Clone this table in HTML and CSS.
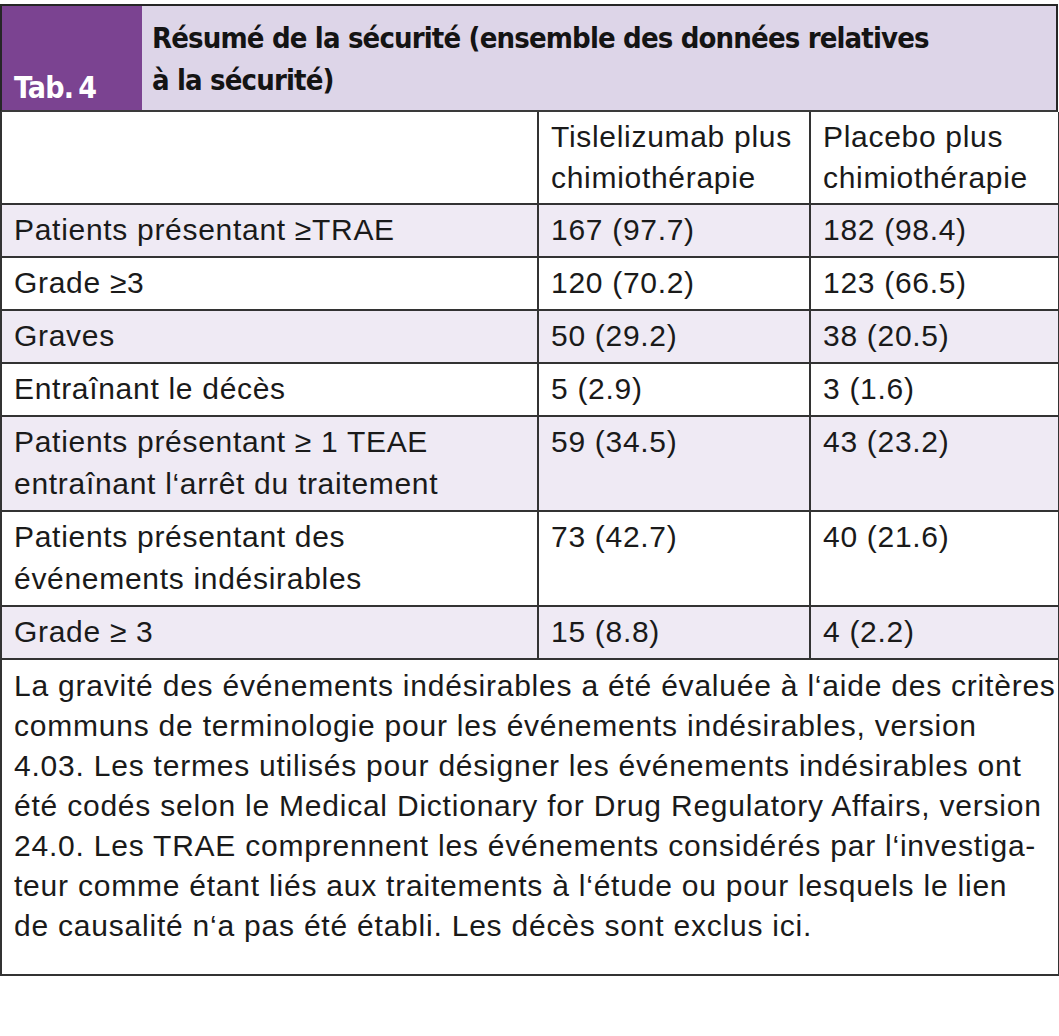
FILE: index.html
```html
<!DOCTYPE html>
<html lang="fr">
<head>
<meta charset="utf-8">
<title>Tab. 4</title>
<link rel="stylesheet" href="styles.css">
</head>
<body>
<div class="wrap">
  <div class="head">
    <div class="tab-label">Tab.<span class="tab-num">4</span></div>
    <div class="tab-title">Résumé de la sécurité (ensemble des données relatives<br>à la sécurité)</div>
  </div>
  <table class="data">
    <colgroup>
      <col class="c1"><col class="c2"><col class="c3">
    </colgroup>
    <tr class="plain colhead">
      <td></td>
      <td>Tislelizumab plus<br>chimiothérapie</td>
      <td>Placebo plus<br>chimiothérapie</td>
    </tr>
    <tr class="tint"><td>Patients présentant ≥TRAE</td><td>167 (97.7)</td><td>182 (98.4)</td></tr>
    <tr class="plain"><td>Grade ≥3</td><td>120 (70.2)</td><td>123 (66.5)</td></tr>
    <tr class="tint"><td>Graves</td><td>50 (29.2)</td><td>38 (20.5)</td></tr>
    <tr class="plain"><td>Entraînant le décès</td><td>5 (2.9)</td><td>3 (1.6)</td></tr>
    <tr class="tint"><td>Patients présentant ≥ 1 TEAE<br>entraînant l‘arrêt du traitement</td><td>59 (34.5)</td><td>43 (23.2)</td></tr>
    <tr class="plain"><td>Patients présentant des<br>événements indésirables</td><td>73 (42.7)</td><td>40 (21.6)</td></tr>
    <tr class="tint"><td>Grade ≥ 3</td><td>15 (8.8)</td><td>4 (2.2)</td></tr>
    <tr class="plain"><td colspan="3" class="note">La gravité des événements indésirables a été évaluée à l‘aide des critères<br>communs de terminologie pour les événements indésirables, version<br>4.03. Les termes utilisés pour désigner les événements indésirables ont<br>été codés selon le Medical Dictionary for Drug Regulatory Affairs, version<br>24.0. Les TRAE comprennent les événements considérés par l‘investiga-<br>teur comme étant liés aux traitements à l‘étude ou pour lesquels le lien<br>de causalité n‘a pas été établi. Les décès sont exclus ici.</td></tr>
  </table>
</div>
</body>
</html>
```

FILE: styles.css
```css
html, body {
  margin: 0;
  padding: 0;
  background: #ffffff;
}

body {
  padding-top: 4px;
  font-family: "Liberation Sans", Arial, sans-serif;
  color: #1a1a1a;
}

.wrap {
  width: 1058px;
}

.head {
  display: flex;
  border: 2px solid #262626;
  border-bottom: 2px solid #3a3a3a;
  height: 108px;
  box-sizing: border-box;
}

.tab-label {
  width: 140px;
  background: #7b4391;
  color: #ffffff;
  font-family: "Liberation Sans Narrow", "DejaVu Sans Condensed", sans-serif;
  font-weight: bold;
  font-size: 30px;
  display: flex;
  align-items: flex-end;
  padding: 0 0 5px 12px;
  box-sizing: border-box;
  letter-spacing: -0.8px;
}

.tab-num {
  margin-left: 5px;
}

.tab-title {
  flex: 1;
  background: #ddd5e8;
  font-family: "Liberation Sans Narrow", "DejaVu Sans Condensed", sans-serif;
  font-weight: bold;
  font-size: 29px;
  letter-spacing: -0.85px;
  line-height: 42px;
  padding: 11px 0 0 10px;
  color: #141414;
}

.data {
  width: 1058px;
  border-collapse: collapse;
  table-layout: fixed;
}

.c1 { width: 537px; }
.c2 { width: 272px; }
.c3 { width: 249px; }

.data td {
  border: 2px solid #333333;
  border-top: 0;
  padding: 4px 12px 5px 12px;
  vertical-align: top;
  font-size: 30px;
  letter-spacing: 0.7px;
  line-height: 42px;
  color: #1a1a1a;
}

.colhead td {
  line-height: 41px;
}

.data tr + tr td {
  border-top: 2px solid #333333;
}

.tint td {
  background: #efeaf4;
}

.plain td {
  background: #ffffff;
}

.data td.note {
  line-height: 40px;
  letter-spacing: 0.78px;
  white-space: nowrap;
  padding: 6px 12px 28px 12px;
}
```
